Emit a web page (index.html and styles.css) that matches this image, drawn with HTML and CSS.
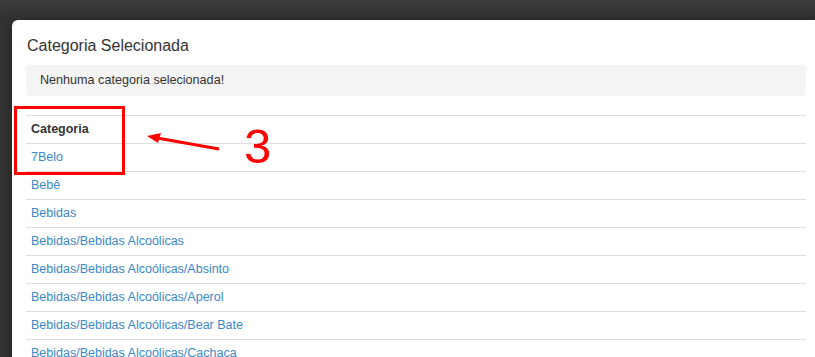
FILE: index.html
```html
<!DOCTYPE html>
<html lang="pt-BR">
	<head>
		<meta charset="UTF-8" />
		<title>Categoria</title>
		<link rel="stylesheet" href="styles.css">
	</head>
	<body>
		<div class="backdrop">
			<div class="modal">
				<h4 class="modal-title">Categoria Selecionada</h4>
				<div class="alert">Nenhuma categoria selecionada!</div>

				<div class="table-wrap">
					<table class="cat-table">
						<thead>
							<tr><th>Categoria</th></tr>
						</thead>
						<tbody>
							<tr><td><a href="#">7Belo</a></td></tr>
							<tr><td><a href="#">Bebê</a></td></tr>
							<tr><td><a href="#">Bebidas</a></td></tr>
							<tr><td><a href="#">Bebidas/Bebidas Alcoólicas</a></td></tr>
							<tr><td><a href="#">Bebidas/Bebidas Alcoólicas/Absinto</a></td></tr>
							<tr><td><a href="#">Bebidas/Bebidas Alcoólicas/Aperol</a></td></tr>
							<tr><td><a href="#">Bebidas/Bebidas Alcoólicas/Bear Bate</a></td></tr>
							<tr><td><a href="#">Bebidas/Bebidas Alcoólicas/Cachaça</a></td></tr>
						</tbody>
					</table>

					<!-- annotation drawn over the screenshot -->
					<div class="mark-box"></div>
					<svg class="mark-arrow" width="80" height="20" viewBox="0 0 80 20">
						<line x1="74" y1="15" x2="12" y2="4" stroke="#f00" stroke-width="3" />
						<polygon points="2,2 16,-1 13,9" fill="#f00" />
					</svg>
					<span class="mark-num">3</span>
				</div>
			</div>
		</div>
	</body>
</html>
```

FILE: styles.css
```css
:root {
	--backdrop:  #333;
	--text:      #333;
	--link:      #3b88c9;
	--ruler:     #ddd;
	--alert-bg:  #f4f4f4;
	--mark:      #f00;
}

html, body {
	margin: 0;
	padding: 0;
}

body {
	background: var(--backdrop);
	font-family: "Liberation Sans", Arial, sans-serif;
	color: var(--text);
	overflow: hidden;
}

.backdrop {
	height: 357px;
	padding: 20px 0 0 12px;
	box-sizing: border-box;
	background: linear-gradient(#3c3c3c, #303030 20px, #333 21px);
}

.modal {
	background: #fff;
	border-radius: 6px 0 0 0;
	height: 100%;
	padding: 14px 9px 0 14px;
	box-shadow: 0 3px 9px rgba(0, 0, 0, .5);
}

.modal-title {
	margin: 0;
	font-size: 16px;
	font-weight: normal;
	line-height: 24px;
	color: #333;
	padding-left: 1px;
}

.alert {
	margin-top: 7px;
	background: var(--alert-bg);
	border-radius: 4px;
	padding: 8px 14px;
	font-size: 12.6px;
	line-height: 15px;
	height: 15px;
}

.table-wrap {
	position: relative;
	margin-top: 19px;
}

.cat-table {
	width: 100%;
	border-collapse: collapse;
	font-size: 12.5px;
}

.cat-table th,
.cat-table td {
	text-align: left;
	border-top: 1px solid var(--ruler);
	padding: 5px 5px;
	line-height: 17px;
}

.cat-table th {
	font-weight: bold;
	color: #333;
}

.cat-table a {
	color: var(--link);
	text-decoration: none;
}

.mark-box {
	position: absolute;
	left: -12px;
	top: -9px;
	width: 105px;
	height: 63px;
	border: 3px solid var(--mark);
}

.mark-arrow {
	position: absolute;
	left: 119px;
	top: 19px;
	overflow: visible;
}

.mark-num {
	position: absolute;
	left: 218px;
	top: 3px;
	font-size: 49px;
	line-height: 56px;
	color: var(--mark);
}
```
